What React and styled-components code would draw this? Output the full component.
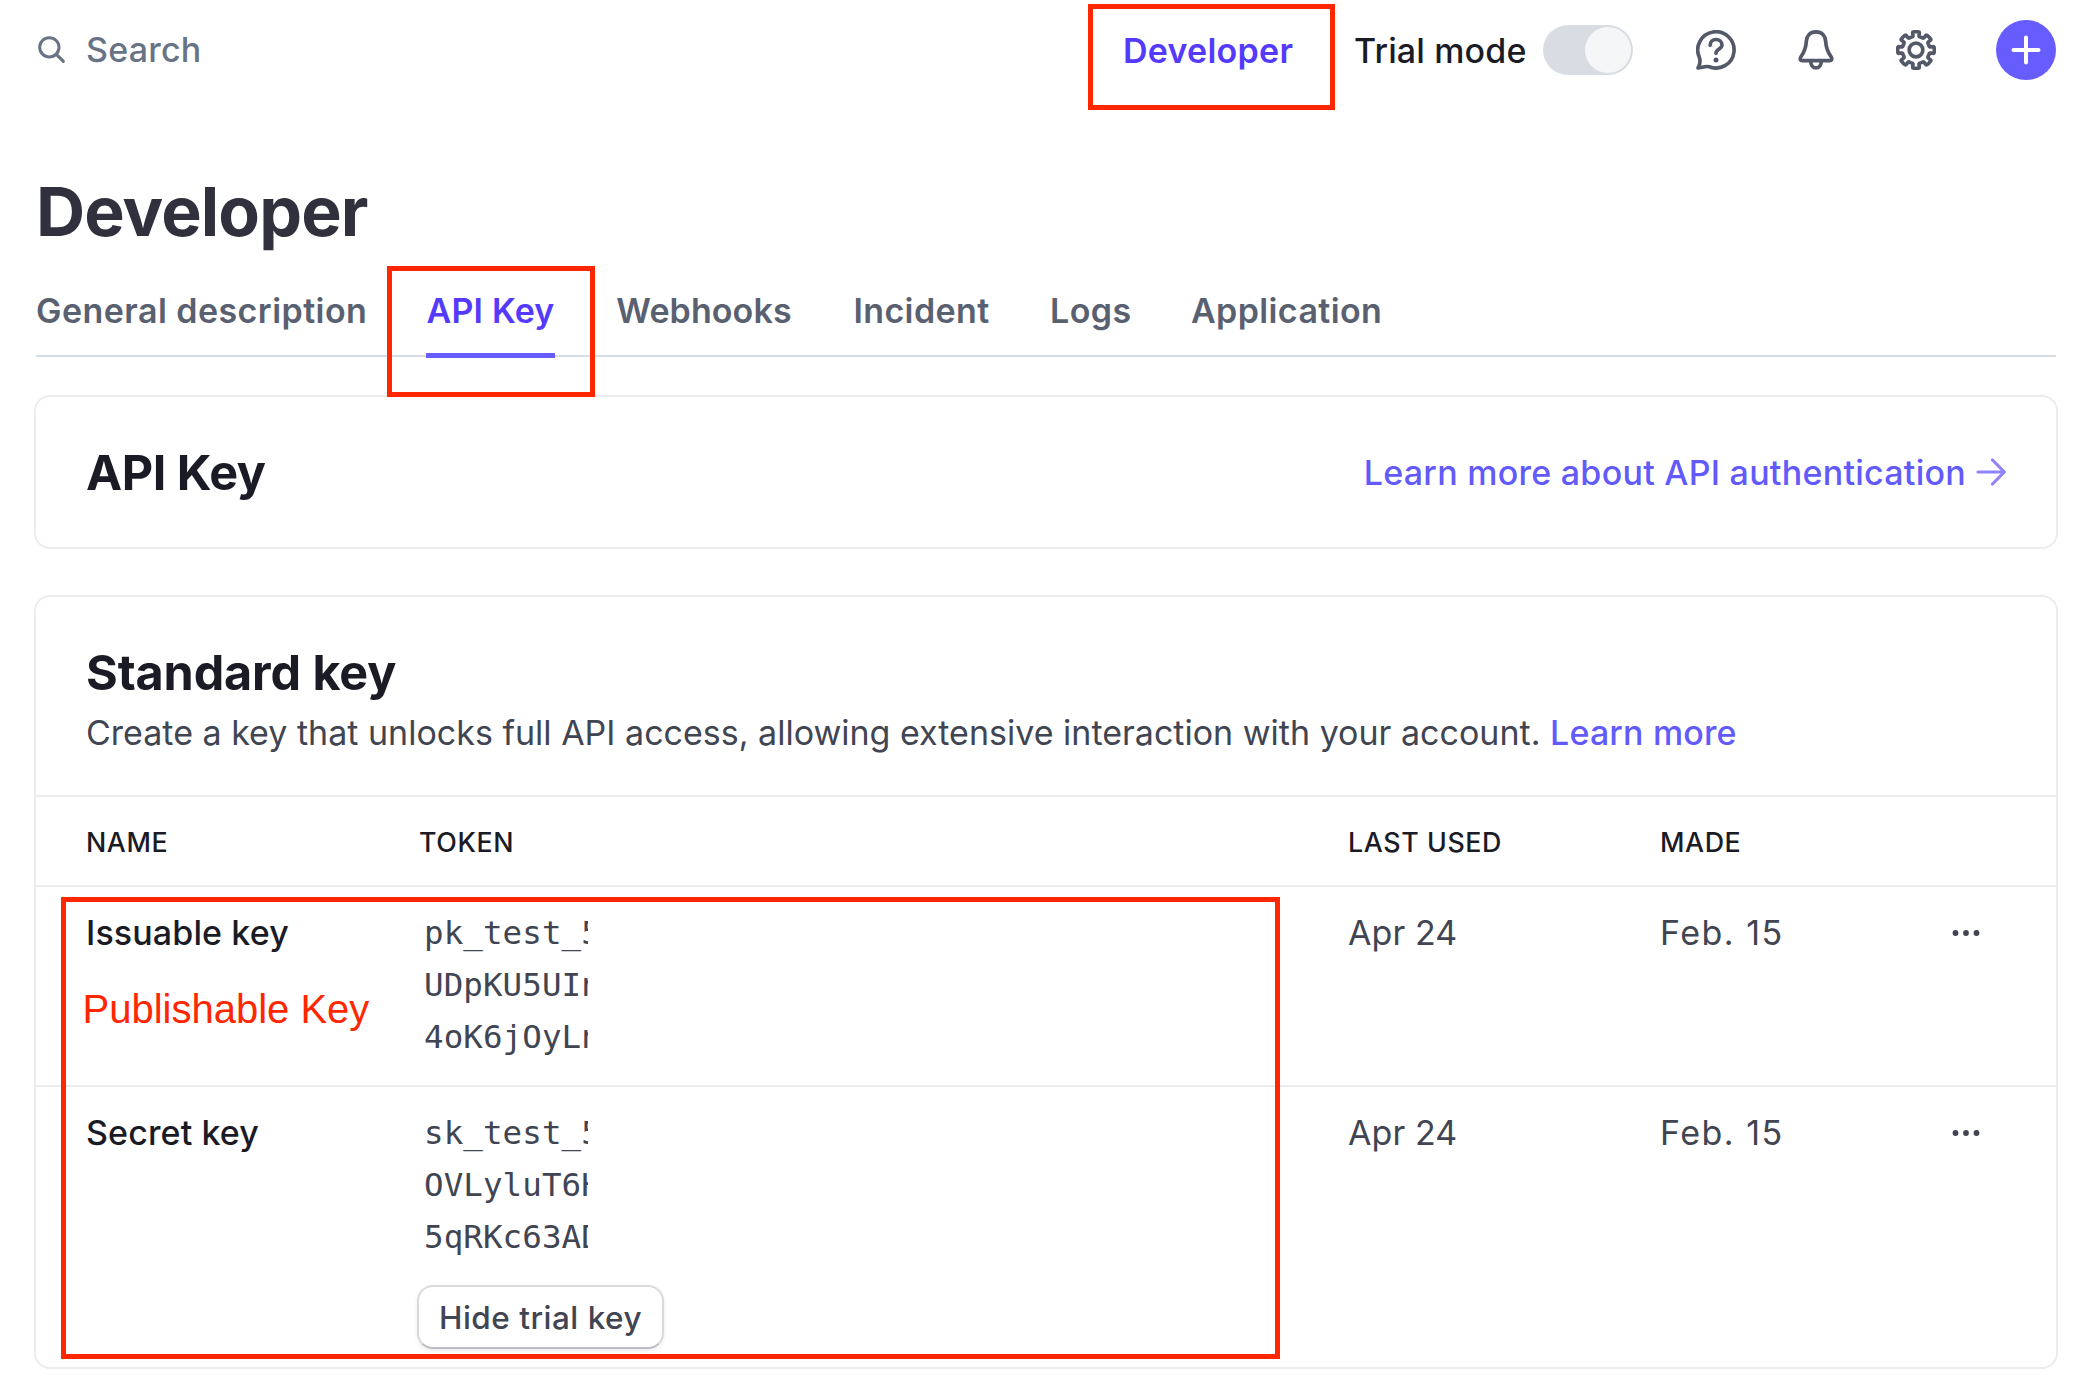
import React from "react";
import styled, { createGlobalStyle } from "styled-components";

const GlobalStyle = createGlobalStyle`
  * {
    box-sizing: border-box;
  }
  body {
    margin: 0;
    background: #ffffff;
    font-family: Inter, "Liberation Sans", sans-serif;
    font-size: 34px;
    line-height: 41px;
    color: #414552;
  }
  h1, h2, p {
    margin: 0;
  }
`;

const Page = styled.div`
  position: relative;
  width: 2090px;
  height: 1388px;
  padding: 0 32px 0 34px;
  overflow: hidden;
`;

const TopBar = styled.header`
  display: flex;
  justify-content: space-between;
  align-items: center;
  height: 100px;
  padding: 0 2px 0 4px;
`;

const SearchBox = styled.div`
  display: flex;
  align-items: center;
  gap: 21px;
  padding-bottom: 1px;
  font-weight: 500;
  letter-spacing: 0.2px;
  color: #687385;
`;

const TopActions = styled.div`
  display: flex;
  align-items: center;
`;

const NavLink = styled.a`
  width: 171px;
  margin-right: 60px;
  padding-top: 1px;
  font-weight: 600;
  letter-spacing: 0.25px;
  color: #533afd;
`;

const ModeLabel = styled.span`
  width: 173px;
  margin-right: 16px;
  padding-top: 1px;
  font-weight: 500;
  letter-spacing: 0.15px;
  white-space: nowrap;
  color: #1a1b25;
`;

const Toggle = styled.div`
  display: flex;
  justify-content: flex-end;
  align-items: center;
  width: 90px;
  height: 50px;
  margin-right: 63px;
  padding-right: 2px;
  border-radius: 25px;
  background: #d8dde4;
`;

const Knob = styled.div`
  width: 46px;
  height: 46px;
  border-radius: 50%;
  background: #f5f6f8;
`;

const IconRow = styled.div`
  display: flex;
  align-items: center;
  gap: 60px;
  color: #545969;
  svg {
    display: block;
  }
`;

const AddButton = styled.div`
  display: flex;
  align-items: center;
  justify-content: center;
  width: 60px;
  height: 60px;
  border-radius: 50%;
  background: #675dff;
  color: #ffffff;
`;

const Title = styled.h1`
  margin-top: 71px;
  padding-left: 2px;
  font-size: 68px;
  line-height: 80px;
  font-weight: 700;
  letter-spacing: -0.9px;
  color: #30313d;
`;

const Tabs = styled.nav`
  display: flex;
  align-items: flex-start;
  gap: 60px;
  height: 87px;
  margin: 19px 2px 38px;
  border-bottom: 2px solid #d8dee4;
`;

const Tab = styled.a`
  flex: none;
  width: ${({ $width }) => $width}px;
  height: 88px;
  padding-top: 20px;
  font-weight: 600;
  text-align: center;
  white-space: nowrap;
  letter-spacing: ${({ $spacing }) => $spacing}px;
  color: ${({ $active }) => ($active ? "#533afd" : "#596171")};
  border-bottom: 5px solid ${({ $active }) => ($active ? "#675dff" : "transparent")};
`;

const Card = styled.section`
  border: 2px solid #ebecf0;
  border-radius: 16px;
  background: #ffffff;
`;

const BannerCard = styled(Card)`
  display: flex;
  justify-content: space-between;
  align-items: center;
  height: 154px;
  margin-bottom: 46px;
  padding: 0 50px;
`;

const KeysCard = styled(Card)`
  height: 774px;
`;

const CardTitle = styled.h2`
  font-size: 48.5px;
  line-height: 61px;
  font-weight: 700;
  letter-spacing: ${({ $spacing }) => $spacing}px;
  color: #1a1b25;
`;

const Link = styled.a`
  font-weight: 500;
  letter-spacing: 0.15px;
  color: #625afa;
`;

const DocsLink = styled(Link)`
  display: flex;
  align-items: center;
  gap: 10px;
  letter-spacing: 0.26px;
`;

const CardHead = styled.div`
  height: 200px;
  padding: 45px 50px 0;
  border-bottom: 2px solid #ebecf0;
`;

const CardDesc = styled.p`
  margin-top: -1px;
  line-height: 61px;
  letter-spacing: 0.005px;
  white-space: nowrap;
`;

const Row = styled.div`
  display: grid;
  grid-template-columns: 334px 928px 312px 291px auto;
  align-items: start;
  height: ${({ $height }) => $height}px;
  padding: 20px 0 0 50px;
  line-height: 51px;
  border-bottom: ${({ $last }) => ($last ? "none" : "2px solid #ebecf0")};
`;

const HeadRow = styled(Row)`
  grid-template-columns: 333px 929px 312px 291px auto;
  font-size: 26.8px;
  line-height: 50px;
  font-weight: 500;
  letter-spacing: 0.6px;
  color: #1a1b25;
`;

const KeyName = styled.div`
  font-weight: 500;
  letter-spacing: 0.12px;
  color: #1a1b25;
`;

const DateCell = styled.div`
  letter-spacing: ${({ $spacing }) => $spacing}px;
`;

const Token = styled.div`
  width: 164px;
  margin-left: 4px;
  overflow: hidden;
  font-family: "DejaVu Sans Mono", monospace;
  font-size: 32.5px;
  line-height: 52px;
  letter-spacing: 0.08px;
  white-space: pre;
`;

const HideButton = styled.button`
  display: block;
  width: 247px;
  height: 64px;
  margin: 22px 0 0 -3px;
  padding: 0;
  font: 500 31.5px Inter, "Liberation Sans", sans-serif;
  letter-spacing: 0.5px;
  color: #414552;
  background: #ffffff;
  border: 2px solid #d9dadd;
  border-bottom-color: #bcbdc2;
  border-radius: 16px;
  box-shadow: 0 2px 4px rgba(0, 0, 0, 0.08);
`;

const MoreIcon = styled.svg`
  display: block;
  margin-top: 21.5px;
`;

const Highlight = styled.div`
  position: absolute;
  left: ${({ $x }) => $x}px;
  top: ${({ $y }) => $y}px;
  width: ${({ $w }) => $w}px;
  height: ${({ $h }) => $h}px;
  border: 5px solid #ff2600;
  pointer-events: none;
`;

const Note = styled.div`
  position: absolute;
  left: 82.5px;
  top: 986px;
  font: 40px/46px "Liberation Sans", Arial, sans-serif;
  color: #ff2600;
`;

const tabs = [
  { label: "General description", width: 330, spacing: 0.45 },
  { label: "API Key", width: 129, spacing: 0.2 },
  { label: "Webhooks", width: 178, spacing: 0.1 },
  { label: "Incident", width: 137, spacing: 0.4 },
  { label: "Logs", width: 81, spacing: 0.45 },
  { label: "Application", width: 191, spacing: 0.38 },
];

const keys = [
  {
    name: "Issuable key",
    token: ["pk_test_5", "UDpKU5UIn", "4oK6jOyLn"],
    used: "Apr 24",
    made: "Feb. 15",
    height: 200,
  },
  {
    name: "Secret key",
    token: ["sk_test_5", "OVLyluT6H", "5qRKc63AD"],
    used: "Apr 24",
    made: "Feb. 15",
    height: 280,
    revealed: true,
  },
];

// Eight rounded teeth around a 120 unit box
const gearPath = () => {
  const points = [];
  for (let i = 0; i < 240; i++) {
    const a = (i / 240) * Math.PI * 2;
    const wave = Math.tanh(2.4 * (Math.cos(8 * a) + 0.1)) / Math.tanh(2.4);
    const r = 48 + 7 * wave;
    const t = a + 0.05 * Math.sin(16 * a);
    points.push(`${(60 + r * Math.sin(t)).toFixed(2)} ${(60 - r * Math.cos(t)).toFixed(2)}`);
  }
  return `M${points.join("L")}Z`;
};

const stroke = {
  fill: "none",
  stroke: "currentColor",
  strokeLinecap: "round",
  strokeLinejoin: "round",
};

const SearchIcon = () => (
  <svg width="27" height="27" viewBox="0 0 81 81" {...stroke} strokeWidth="9">
    <circle cx="34" cy="34" r="29" />
    <path d="M56 56L76 76" />
  </svg>
);

const HelpIcon = () => (
  <svg width="40" height="40" viewBox="0 0 120 120" {...stroke} strokeWidth="11">
    <path d="M10 82A54.5 54.5 0 1 1 40 110.500C29 107 18 113 6 114C13 102 14 93 10 82Z" />
    <path d="M42.500 46C42.500 35 50 28.500 60 28.500S78 35 78 45C78 57 60 57 60 70" />
    <circle cx="60" cy="90" r="7.5" fill="currentColor" stroke="none" />
  </svg>
);

const BellIcon = () => (
  <svg width="40" height="40" viewBox="0 0 120 120" {...stroke} strokeWidth="11">
    <path d="M60 5.500C42 5.500 32 18 31 34C30 54 26 64 15 80C10 87 13 92 19 92H101C107 92 110 87 105 80C94 64 90 54 89 34C88 18 78 5.500 60 5.500Z" />
    <path d="M44 93C44 105 50 114 60 114S76 105 76 93" />
  </svg>
);

const GearIcon = () => (
  <svg width="40" height="40" viewBox="0 0 120 120" {...stroke} strokeWidth="11">
    <path d={gearPath()} />
    <circle cx="60" cy="60" r="20.5" />
  </svg>
);

const PlusIcon = () => (
  <svg width="30" height="30" viewBox="0 0 30 30" {...stroke} strokeWidth="4">
    <path d="M15 2.500V27.500M2.500 15H27.500" />
  </svg>
);

const ArrowIcon = () => (
  <svg width="30" height="28" viewBox="0 0 30 28" {...stroke} stroke="#9083ff" strokeWidth="3.2">
    <path d="M2 14H28M16.500 2L28.300 14L16.500 26" />
  </svg>
);

const App = () => {
  return (
    <>
      <GlobalStyle />
      <Page>
        <TopBar>
          <SearchBox>
            <SearchIcon />
            Search
          </SearchBox>
          <TopActions>
            <NavLink>Developer</NavLink>
            <ModeLabel>Trial mode</ModeLabel>
            <Toggle>
              <Knob />
            </Toggle>
            <IconRow>
              <HelpIcon />
              <BellIcon />
              <GearIcon />
              <AddButton>
                <PlusIcon />
              </AddButton>
            </IconRow>
          </TopActions>
        </TopBar>

        <Title>Developer</Title>
        <Tabs>
          {tabs.map((tab) => (
            <Tab
              key={tab.label}
              $width={tab.width}
              $spacing={tab.spacing}
              $active={tab.label === "API Key"}
            >
              {tab.label}
            </Tab>
          ))}
        </Tabs>

        <BannerCard>
          <CardTitle $spacing={-0.5}>API Key</CardTitle>
          <DocsLink>
            Learn more about API authentication
            <ArrowIcon />
          </DocsLink>
        </BannerCard>

        <KeysCard>
          <CardHead>
            <CardTitle $spacing={-0.12}>Standard key</CardTitle>
            <CardDesc>
              Create a key that unlocks full API access, allowing extensive interaction with your account.{" "}
              <Link>Learn more</Link>
            </CardDesc>
          </CardHead>
          <HeadRow $height={90}>
            <div>NAME</div>
            <div>TOKEN</div>
            <div>LAST USED</div>
            <div>MADE</div>
          </HeadRow>
          {keys.map((item) => (
            <Row key={item.name} $height={item.height} $last={item.revealed}>
              <KeyName>{item.name}</KeyName>
              <div>
                <Token>{item.token.join("\n")}</Token>
                {item.revealed && <HideButton>Hide trial key</HideButton>}
              </div>
              <DateCell $spacing={0.1}>{item.used}</DateCell>
              <DateCell $spacing={1.5}>{item.made}</DateCell>
              <MoreIcon width="30" height="8" viewBox="0 0 30 8" fill="#414552">
                <circle cx="4.5" cy="4" r="2.9" />
                <circle cx="15" cy="4" r="2.9" />
                <circle cx="25.5" cy="4" r="2.9" />
              </MoreIcon>
            </Row>
          ))}
        </KeysCard>

        <Note>Publishable Key</Note>
        <Highlight $x={1088} $y={4} $w={247} $h={106} />
        <Highlight $x={387} $y={266} $w={208} $h={131} />
        <Highlight $x={61} $y={897} $w={1219} $h={462} />
      </Page>
    </>
  );
};

export default App;
